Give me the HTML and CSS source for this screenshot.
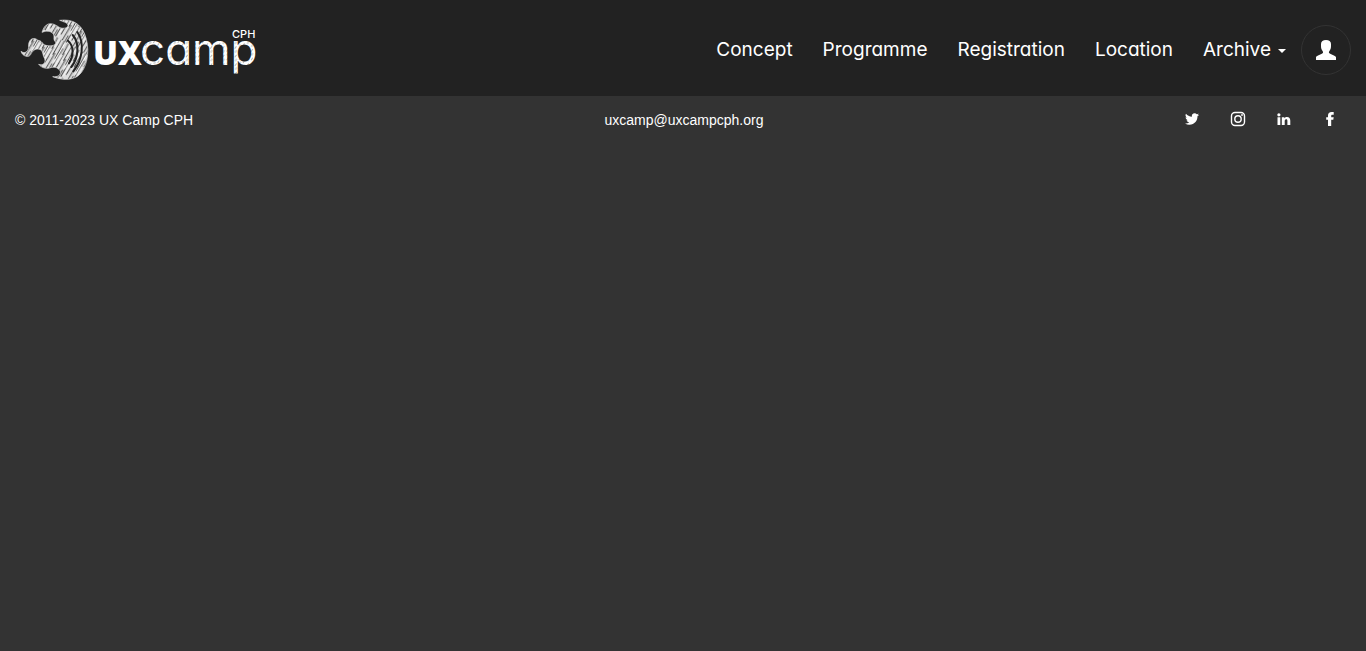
FILE: index.html
```html
<!DOCTYPE html>
<html lang="en">
<head>
<meta charset="utf-8">
<meta name="viewport" content="width=device-width, initial-scale=1">
<title>UX Camp CPH</title>
<link rel="stylesheet" href="styles.css">
</head>
<body>
<header class="navbar">
  <a class="brand" href="#" aria-label="UX Camp CPH">
    <svg class="logo" viewBox="0 0 240 64" aria-hidden="true">
      <defs>
        <pattern id="hatch" width="37" height="97" patternUnits="userSpaceOnUse" patternTransform="rotate(30)">
          <rect width="37" height="97" fill="#ddd"/>
          <path d="M3 0L5 60M11 20L10 97M17 0L19 38M23 30L21 84M29 0L30 52M34 44L33 97M5 76V97" fill="none" stroke="#333" stroke-width="2.500"/>
          <path d="M7 5L8 70M14 40L15 90M26 0L25 60" fill="none" stroke="#fff" stroke-width="3"/>
        </pattern>
        <pattern id="chalk" width="5" height="7" patternUnits="userSpaceOnUse" patternTransform="rotate(35)">
          <rect width="5" height="7" fill="#fff"/>
          <path d="M1 0V3M3.500 4V7" stroke="#888" stroke-width=".6"/>
        </pattern>
      </defs>
      <g transform="translate(-10 -8) scale(.33333)">
        <path fill="url(#hatch)" stroke="#ddd" stroke-width="2" d="M149 31C188 26 212 42 224 72C240 112 235 160 214 188C196 211 162 213 128 200C143 202 153 195 151 183C143 171 131 169 119 174C107 177 94 173 86 163C100 168 108 158 104 146C97 136 101 127 92 119C78 113 67 122 62 134C55 144 37 139 33 124C44 132 53 126 56 113C53 88 70 78 84 91C97 91 97 107 114 107C126 109 139 105 137 96C126 88 138 76 126 68C116 61 104 64 96 67C104 39 122 34 145 50C155 58 173 55 174 47C174 39 163 36 149 31Z"/>
        <g fill="none" stroke="#222" stroke-linecap="round">
          <path stroke-width="6" d="M174 92C193 109 191 137 177 160"/>
          <path stroke-width="6" d="M188 75C210 100 205 145 184 171"/>
          <path stroke-width="6" d="M202 66C225 99 217 151 190 184"/>
        </g>
      </g>
      <text class="logo-ux" x="73" y="47">UX</text>
      <text class="logo-camp" x="120" y="47">camp</text>
      <text class="logo-cph" x="212" y="20">CPH</text>
    </svg>
  </a>
  <nav class="menu" aria-label="Main">
    <a class="menu-link" href="#">Concept</a>
    <a class="menu-link" href="#">Programme</a>
    <a class="menu-link" href="#">Registration</a>
    <a class="menu-link" href="#">Location</a>
    <button class="menu-link" type="button" aria-haspopup="true">Archive<span class="caret"></span></button>
    <a class="profile" href="#" aria-label="Profile">
      <svg width="20" height="20" viewBox="0 0 20 20" fill="currentColor" aria-hidden="true"><path d="M0 20V17.3C0 16 4.8 14.4 6.6 13.2C7.4 12.6 7.1 11.8 6.4 10.7C5.5 9.6 5 8.2 5 6V4C5 1.4 7 0 10 0S15 1.4 15 4V6C15 8.2 14.5 9.6 13.6 10.7C12.9 11.8 12.6 12.6 13.4 13.2C15.2 14.4 20 16 20 17.3V20Z"/></svg>
    </a>
  </nav>
</header>
<footer class="footer">
  <span class="copyright">© 2011-2023 UX Camp CPH</span>
  <a class="email" href="mailto:uxcamp@uxcampcph.org">uxcamp@uxcampcph.org</a>
  <div class="social">
    <a href="#" aria-label="Twitter"><svg width="16" height="16" viewBox="0 0 24 24" fill="currentColor"><path d="M22.500 5.500c-.8.3-1.600.6-2.500.7.900-.5 1.600-1.400 1.900-2.400-.8.500-1.800.9-2.700 1.100A4.300 4.300 0 0 0 11.800 8.800C8.200 8.600 5.100 6.900 3 4.300a4.300 4.300 0 0 0 1.300 5.700c-.7 0-1.400-.2-1.900-.5 0 2.100 1.500 3.900 3.400 4.300-.6.200-1.300.2-1.900.1.500 1.700 2.100 2.900 4 3A8.600 8.600 0 0 1 1.500 18.700 12.200 12.200 0 0 0 8.100 20.600c8 0 12.400-6.700 12.100-12.700.9-.6 1.600-1.400 2.300-2.400Z"/></svg></a>
    <a href="#" aria-label="Instagram"><svg width="16" height="16" viewBox="0 0 16 16" fill="none" stroke="currentColor" stroke-width="1.400"><rect x="1.500" y="1.500" width="13" height="13" rx="3.500"/><circle cx="8" cy="8" r="3.200"/><circle cx="12" cy="4" r=".9" fill="currentColor" stroke="none"/></svg></a>
    <a href="#" aria-label="LinkedIn"><svg width="16" height="16" viewBox="0 0 16 16" fill="currentColor"><circle cx="2.900" cy="3.800" r="1.600"/><path d="M1.500 6.200h2.800V14H1.500ZM5.800 6.200h2.600v1.100C9 6.400 9.900 6 11 6c2.300 0 3.300 1.400 3.300 3.700V14h-2.900v-3.900c0-1.200-.3-1.800-1.200-1.800-1.100 0-1.500.8-1.500 1.900V14H5.800Z"/></svg></a>
    <a href="#" aria-label="Facebook"><svg width="16" height="16" viewBox="0 0 16 16" fill="currentColor"><path d="M6 15V8.800H4.200V6.200H6V4.600C6 2.200 7.300 1 9.700 1h2v2.700h-1.300c-.9 0-1.200.4-1.200 1.200v1.300h2.500l-.4 2.600H9.200V15Z"/></svg></a>
  </div>
</footer>
</body>
</html>
```
FILE: styles.css
```css
* {
  box-sizing: border-box;
}

body {
  margin: 0;
  background: #333;
  color: #fff;
  font: 14px/20px "Liberation Sans", Arial, sans-serif;
}

a {
  color: inherit;
  text-decoration: none;
}

svg {
  display: block;
}

.navbar {
  display: flex;
  align-items: center;
  justify-content: space-between;
  padding: 18px 15px 14px 20px;
  background: #222;
}

.logo {
  width: 240px;
  height: 64px;
}

.logo-ux {
  font: 800 33px "Open Sans", sans-serif;
  fill: #fff;
}

.logo-camp {
  font: 400 44px Inter, sans-serif;
  font-feature-settings: "cv11";
  fill: url(#chalk);
}

.logo-cph {
  font: 500 11px Inter, sans-serif;
  fill: #fff;
}

.menu {
  display: flex;
  align-items: center;
}

.menu-link {
  display: flex;
  align-items: center;
  padding: 0 15px;
  border: 0;
  background: none;
  color: #fff;
  font: 400 19px/24px Inter, sans-serif;
  font-feature-settings: "cv11";
  cursor: pointer;
}

.caret {
  margin: 2px 0 0 7px;
  border: 4px solid transparent;
  border-top-color: #fff;
  border-bottom: 0;
}

.profile {
  display: grid;
  place-items: center;
  width: 50px;
  height: 50px;
  border: 1px solid #333;
  border-radius: 50%;
}

.footer {
  display: grid;
  grid-template-columns: 1fr auto 1fr;
  align-items: start;
  padding: 14px 13px 14px 15px;
}

.social {
  display: flex;
  justify-content: flex-end;
}

.social a {
  padding: 1px 15px;
}
```
